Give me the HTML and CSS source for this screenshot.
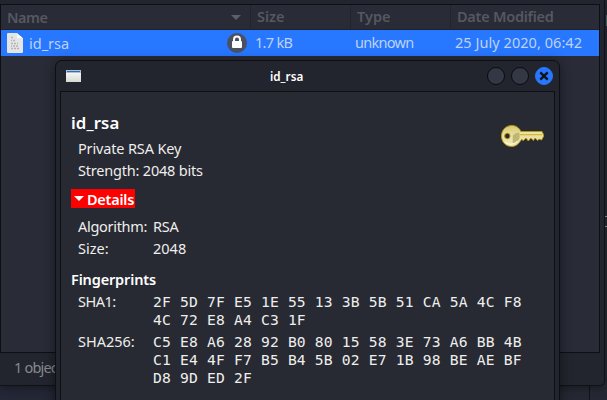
FILE: index.html
```html
<!DOCTYPE html>
<html lang="en">
<head>
<meta charset="utf-8">
<title>id_rsa</title>
<link rel="stylesheet" href="styles.css">
</head>
<body>
<div class="desktop">
  <div class="terminal-edge"><span class="prompt">k</span><span class="tick"></span></div>
  <main class="files">
    <section class="pane">
      <div class="row head">
        <div class="cell name"><span class="t-name">Name</span><svg class="sort" width="10" height="5" viewBox="0 0 10 5"><path d="M0 0h10L5 5z" fill="#5d6067"/></svg></div>
        <div class="cell"><span class="t-size">Size</span></div>
        <div class="cell"><span class="t-type">Type</span></div>
        <div class="cell"><span class="t-date">Date Modified</span></div>
      </div>
      <div class="row item">
        <div class="cell name">
          <svg class="doc" width="16" height="20" viewBox="0 0 16 20"><path d="M1 0h10l5 5v14q0 1-1 1H1q-1 0-1-1V1q0-1 1-1z" fill="#e5e5e5"/><path d="M10 0v4q0 1 1 1h5z" fill="#fff"/><path d="M10 0h6v5z" fill="#2777ff"/><path d="M4 4.500h2M4 7.500h1m1 0h2M4 10.500h2m1 0h2m1 0h1M4 13h1m1 0h2m1 0h2M4 15.500h2m1 0h2m1 0h2" stroke="#b4b4b4" stroke-width="1.500"/></svg>
          <span class="r-name">id_rsa</span>
          <svg class="lock" width="20" height="20" viewBox="0 0 20 20"><circle cx="10" cy="10" r="10" fill="#4b5162"/><rect x="5" y="8" width="10" height="7" rx="1" fill="#fff"/><path d="M7 9V6.500a3 3 0 0 1 6 0V9" fill="none" stroke="#fff" stroke-width="2"/></svg>
        </div>
        <div class="cell"><span class="r-size">1.7 kB</span></div>
        <div class="cell"><span class="r-type">unknown</span></div>
        <div class="cell"><span class="r-date">25 July 2020, 06:42</span></div>
      </div>
    </section>
    <footer class="status">1 object</footer>
  </main>
  <section class="dialog">
    <header class="titlebar">
      <svg class="app" width="15" height="12" viewBox="0 0 15 12"><defs><linearGradient id="w" x2="0" y2="1"><stop stop-color="#fff"/><stop offset="1" stop-color="#d8d9d3"/></linearGradient></defs><path d="M0 0h15v12H0z" fill="url(#w)"/><path d="M0 0h15v3H0z" fill="#a9c0dc"/><path d="M1 1.500h13" stroke="#376dac"/></svg>
      <span class="title">id_rsa</span>
      <div class="buttons"><i></i><i></i><i class="close"><svg width="10" height="10" viewBox="0 0 10 10"><path d="M1.300 1.300l7.400 7.400M8.700 1.300L1.300 8.700" stroke="#10141b" stroke-width="2.400"/></svg></i></div>
    </header>
    <div class="content">
      <svg class="key" width="43" height="22" viewBox="0 0 44 22" preserveAspectRatio="none">
        <defs><linearGradient id="g" x2="0" y2="1"><stop stop-color="#d7c76c"/><stop offset=".45" stop-color="#e8dea0"/><stop offset="1" stop-color="#f1eab5"/></linearGradient></defs>
        <path d="M11 .5c4.500 0 7.800 2.500 9.300 6H42l1.500 3v2l-2 3.500-2.500-1-1.500 1.500-2.500-2.500-2 2.500-2.500-2.500-2.500 3-2.500-3-2.500 2.500-2-1C18 19 15 21.500 11 21.500 5 21.500.5 17 .5 11S5 .5 11 .5z" fill="url(#g)" stroke="#b59514"/>
        <path d="M12 10.500q2.500-3 7-3v5q-1 5-7 6z" fill="#bdb675"/>
        <path d="M19 8h22.500" stroke="#f5edaa"/><path d="M19.500 9.700H42" stroke="#cfaf24"/>
        <path d="M4 17q6 5 13-1" fill="none" stroke="#fffbe0"/>
        <circle cx="6.500" cy="11" r="2.800" fill="#272a34" stroke="#b89612"/>
      </svg>
      <h1>id_rsa</h1>
      <p class="kind">Private RSA Key</p>
      <p class="strength">Strength: 2048 bits</p>
      <div class="details"><svg width="10" height="5" viewBox="0 0 10 5"><path d="M0 0h10L5 5z" fill="#fff"/></svg><span>Details</span></div>
      <dl class="facts"><dt class="algo">Algorithm:</dt><dd class="rsa">RSA</dd><dt class="sz">Size:</dt><dd>2048</dd></dl>
      <h2>Fingerprints</h2>
      <dl class="prints">
        <dt class="sha1">SHA1:</dt><dd>2F 5D 7F E5 1E 55 13 3B 5B 51 CA 5A 4C F8<br>4C 72 E8 A4 C3 1F</dd>
        <dt class="sha2">SHA256:</dt><dd>C5 E8 A6 28 92 B0 80 15 58 3E 73 A6 BB 4B<br>C1 E4 4F F7 B5 B4 5B 02 E7 1B 98 BE AE BF<br>D8 9D ED 2F</dd>
      </dl>
    </div>
  </section>
</div>
</body>
</html>
```
FILE: styles.css
```css
* { box-sizing: border-box; }
body { margin: 0; background: #232733; font: 14.5px/22px "Noto Sans", sans-serif; color: #eeeeec; overflow: hidden; }
h1, h2, p, dl, dd { margin: 0; }
svg { display: block; flex: none; }
span { white-space: nowrap; }
.desktop { position: relative; width: 607px; height: 400px; overflow: hidden; background: linear-gradient(90deg, #232736, #252832 60%); }
.terminal-edge { position: absolute; left: 589px; top: 0; width: 18px; height: 400px; border-left: 1px solid #11131a; background: #252832; }
.prompt { position: absolute; left: 15px; top: 9px; color: #827565; }
.tick { position: absolute; left: 15px; top: 216px; width: 2px; height: 11px; border: solid #8d9097; border-width: 1px 0; }
.files { position: relative; width: 605px; height: 386px; padding: 4px 5px 0 0; background: #23252e; border-right: 1px solid #101218; border-bottom: 1px solid #101218; border-radius: 0 0 5px 0; box-shadow: 0 2px 8px #0005; }
.pane { height: 349px; width: 600px; border: 1px solid #0d0f14; background: #292b37; }
.row { display: grid; grid-template-columns: 249px 100px 100px 1fr; }
.head { height: 25px; border-bottom: 1px solid #20222b; color: #55585f; font-weight: 600; line-height: 23px; }
.head .cell { padding-left: 6px; border-left: 1px solid #22242c; }
.head .cell.name { border-left: 0; display: flex; align-items: center; justify-content: space-between; padding-right: 9px; }
.t-name { letter-spacing: -.5px; }
.t-date { letter-spacing: -.25px; }
.item { height: 26px; background: #2777ff; color: #bdd2f7; line-height: 25px; }
.item .cell { padding-left: 5px; }
.item .name { display: flex; align-items: center; padding: 0 3px 0 6px; }
.r-name { margin-left: 6px; }
.r-size { letter-spacing: -.7px; }
.r-type { letter-spacing: -.7px; }
.r-date { letter-spacing: .05px; }
.lock { margin-left: auto; }
.status { padding: 3px 14px; color: #878990; letter-spacing: -.8px; }
.dialog { position: absolute; left: 55px; top: 60px; width: 505px; height: 350px; border: 1px solid #0d0f14; border-radius: 7px 7px 0 0; padding: 0 4px; background: #23252e; box-shadow: 0 2px 12px #0007; }
.titlebar { height: 30px; display: grid; grid-template-columns: 204px 1fr auto; align-items: center; padding: 0 1px 0 6px; }
.title { color: #fff; font-size: 11.7px; font-weight: 600; }
.buttons { display: flex; gap: 6px; justify-self: end; padding-right: 1px; }
.buttons i { width: 18px; height: 18px; border: 1px solid #090b10; border-radius: 50%; background: #343844; display: grid; place-items: center; }
.buttons .close { background: #2777ff; border-color: #2777ff; }
.content { position: relative; height: 320px; border: 1px solid #0d0f14; border-bottom: 0; padding: 19px 10px; background: #272933; }
.key { position: absolute; right: 10px; top: 33px; }
h1 { font-size: 16.8px; line-height: 24px; font-weight: 600; color: #fff; letter-spacing: .1px; }
.kind, .strength { padding-left: 7px; }
.kind { margin-top: 2px; letter-spacing: -.15px; }
.strength { letter-spacing: -.2px; }
.details { display: flex; align-items: center; gap: 3px; width: 64px; height: 19px; margin-top: 8px; padding-left: 3px; background: #f00; color: #fff; font-weight: 600; letter-spacing: -.25px; }
.facts, .prints { display: grid; grid-template-columns: 75px 1fr; padding-left: 7px; }
.facts { margin-top: 7px; }
.algo, .rsa { letter-spacing: -.3px; }
.sha1 { letter-spacing: -.5px; }
h2 { margin-top: 9px; font-size: 14.5px; line-height: 22px; font-weight: 600; color: #fff; letter-spacing: -.15px; }
.prints { row-gap: 1px; }
.prints dd { font: 14.67px/18px "DejaVu Sans Mono", monospace; letter-spacing: .168px; padding-top: 3px; white-space: nowrap; }
```
